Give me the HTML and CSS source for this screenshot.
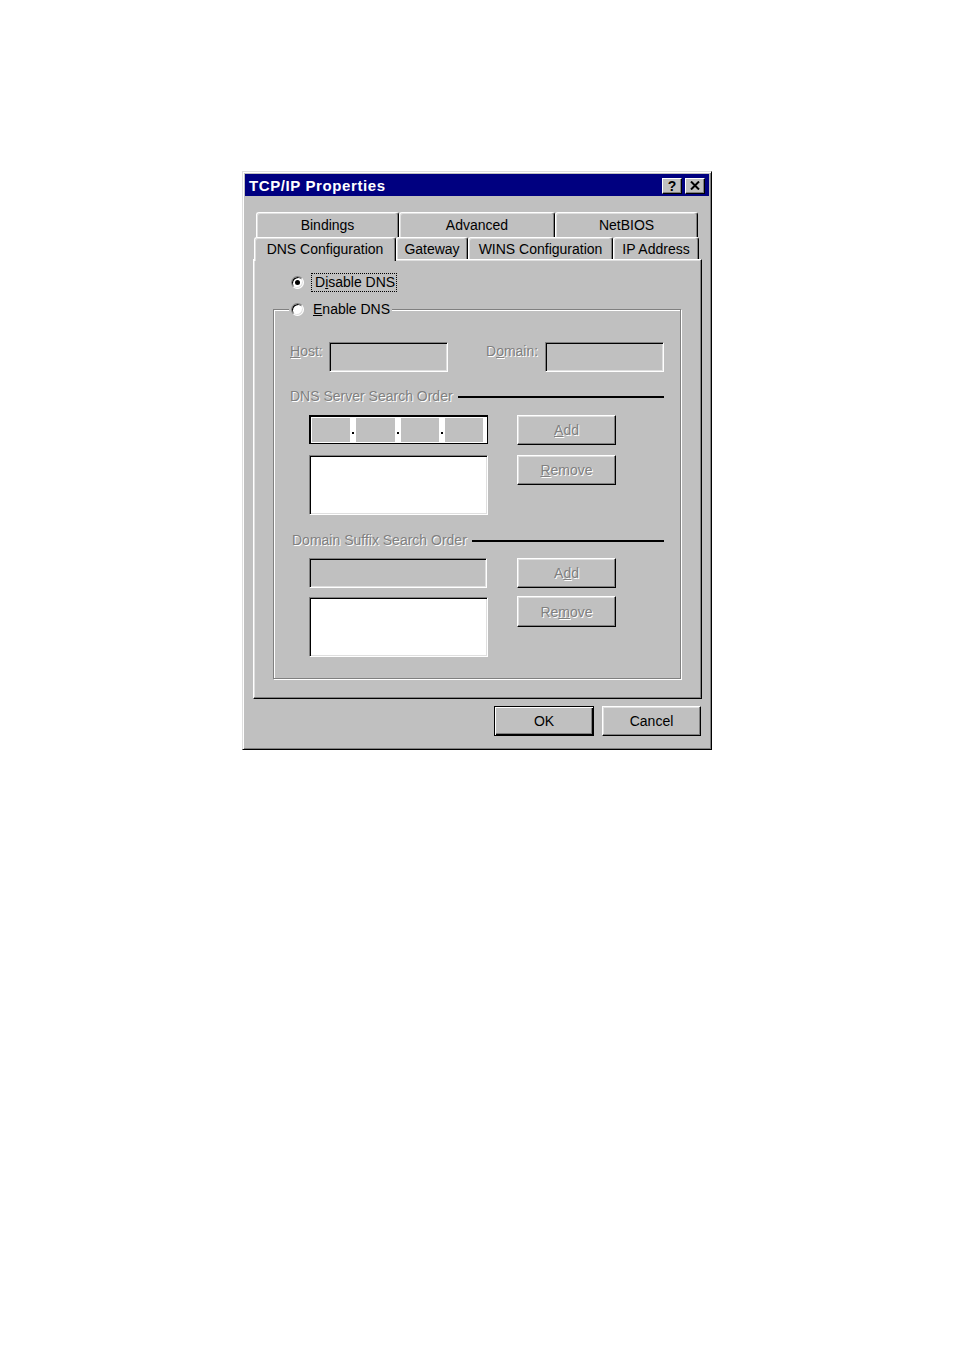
FILE: index.html
```html
<!DOCTYPE html>
<html>
<head>
<meta charset="utf-8">
<title>TCP/IP Properties</title>
<link rel="stylesheet" href="styles.css">
</head>
<body>
<div class="dialog">
  <div class="titlebar">
    <span class="title">TCP/IP Properties</span>
    <div class="tbtns">
      <span class="tbtn help">?</span>
      <span class="tbtn close"><svg width="10" height="9" viewBox="0 0 10 9"><path d="M1 0.5 L9 8.5 M9 0.5 L1 8.5" stroke="#000" stroke-width="2" fill="none"/></svg></span>
    </div>
  </div>

  <div class="tabs">
    <div class="tabrow back">
      <div class="tab t-bind">Bindings</div>
      <div class="tab t-adv">Advanced</div>
      <div class="tab t-net">NetBIOS</div>
    </div>
    <div class="tabrow front">
      <div class="tab sel t-dns">DNS Configuration</div>
      <div class="tab t-gw">Gateway</div>
      <div class="tab t-wins">WINS Configuration</div>
      <div class="tab t-ip">IP Address</div>
    </div>
  </div>

  <div class="panel">
    <div class="radio-row">
      <span class="radio checked"></span>
      <span class="focus">D<u>i</u>sable DNS</span>
    </div>

    <fieldset class="group">
      <legend class="legend"><span class="radio"></span><span class="legend-text"><u>E</u>nable DNS</span></legend>
      <div class="gbody">
        <div class="hostrow">
          <span class="lbl lbl-host dis"><u>H</u>ost:</span>
          <span class="edit"></span>
          <span class="lbl lbl-domain dis">D<u>o</u>main:</span>
          <span class="edit"></span>
        </div>

        <div class="section">
          <span class="dis">DNS Server Search Order</span>
          <span class="rule"></span>
        </div>

        <div class="block">
          <div class="lcol">
            <div class="ipbox">
              <span class="oct"></span><span class="sep"><i></i></span>
              <span class="oct"></span><span class="sep"><i></i></span>
              <span class="oct"></span><span class="sep"><i></i></span>
              <span class="oct"></span>
            </div>
            <div class="list list1"></div>
          </div>
          <div class="rcol">
            <div class="btn dis small"><span><u>A</u>dd</span></div>
            <div class="btn dis small rm1"><span><u>R</u>emove</span></div>
          </div>
        </div>

        <div class="section section2">
          <span class="dis">Domain Suffix Search Order</span>
          <span class="rule"></span>
        </div>

        <div class="block block2">
          <div class="lcol">
            <div class="edit wide"></div>
            <div class="list list2"></div>
          </div>
          <div class="rcol">
            <div class="btn dis small"><span>A<u>d</u>d</span></div>
            <div class="btn dis small rm2"><span>Re<u>m</u>ove</span></div>
          </div>
        </div>
      </div>
    </fieldset>
  </div>

  <div class="actions">
    <div class="btn default ok">OK</div>
    <div class="btn cancel">Cancel</div>
  </div>
</div>
</body>
</html>
```

FILE: styles.css
```css
* { box-sizing: border-box; }

body {
  margin: 0;
  background: #ffffff;
  font-family: "Liberation Sans", Arial, sans-serif;
  font-size: 14px;
  color: #000;
}

.dialog {
  margin: 171px 0 0 242px;
  width: 470px;
  height: 579px;
  background: #c0c0c0;
  border: 1px solid;
  border-color: #dfdfdf #000 #000 #dfdfdf;
  box-shadow: inset 1px 1px #fff, inset -1px -1px #808080;
  padding: 2px;
}

/* Title bar */
.titlebar {
  height: 22px;
  background: #000080;
  color: #fff;
  display: flex;
  align-items: center;
  justify-content: space-between;
  padding: 0 4px 0 4px;
}
.title {
  font-weight: bold;
  font-size: 15px;
  letter-spacing: 0.6px;
  line-height: 20px;
  padding-top: 2px;
}
.tbtns {
  display: flex;
  gap: 3px;
  margin-top: 1px;
}
.tbtn {
  width: 20px;
  height: 16px;
  background: #c0c0c0;
  border: 1px solid;
  border-color: #fff #000 #000 #fff;
  box-shadow: inset -1px -1px #808080;
  display: flex;
  align-items: center;
  justify-content: center;
  color: #000;
}
.help {
  font-weight: bold;
  font-size: 14px;
  line-height: 14px;
}

/* Tabs */
.tabs {
  margin-top: 16px;
  position: relative;
  z-index: 1;
}
.tabrow {
  display: flex;
}
.tabrow.back {
  margin-left: 11px;
  height: 25px;
}
.tabrow.front {
  margin-left: 9px;
  height: 22px;
  align-items: flex-end;
}
.tab {
  background: #c0c0c0;
  border-top: 1px solid #fff;
  border-left: 1px solid #fff;
  border-right: 1px solid #000;
  box-shadow: inset -1px 0 #808080, inset 1px 1px #dfdfdf;
  border-radius: 3px 3px 0 0;
  text-align: center;
  line-height: 17px;
  padding-top: 3px;
}
.back .tab { height: 25px; padding-top: 4px; }
.front .tab { height: 22px; }
.t-bind { width: 143px; }
.t-adv { width: 156px; }
.t-net { width: 143px; }
.t-dns { width: 142px; }
.t-gw { width: 72px; }
.t-wins { width: 145px; }
.t-ip { width: 86px; }
.front .tab.sel {
  height: 24px;
  margin-bottom: -2px;
}

/* Panel */
.panel {
  margin-left: 8px;
  width: 449px;
  height: 440px;
  border: 1px solid;
  border-color: #fff #000 #000 #fff;
  box-shadow: inset -1px -1px #808080, inset 1px 1px #dfdfdf;
  padding: 13px 0 0 37px;
}

.radio-row {
  display: flex;
  align-items: center;
  height: 19px;
}
.radio {
  width: 13px;
  height: 13px;
  border-radius: 50%;
  border: 1px solid;
  border-color: #808080 #fff #fff #808080;
  box-shadow: inset 1px 1px #000, inset -1px -1px #dfdfdf;
  background: #fff;
  display: flex;
  align-items: center;
  justify-content: center;
  flex: none;
}
.radio.checked::after {
  content: "";
  width: 5px;
  height: 5px;
  border-radius: 50%;
  background: #000;
}
.focus {
  margin-left: 7px;
  border: 1px dotted #000;
  padding: 0 1px 0 3px;
  line-height: 17px;
}

/* Group box */
.group {
  margin: 8px 0 0 -18px;
  padding: 0;
  width: 408px;
  min-width: 0;
  border: 1px solid #808080;
  box-shadow: inset 1px 1px #fff, 1px 1px #fff;
}
.legend {
  margin-left: 15px;
  padding: 0 2px;
  display: flex;
  align-items: center;
  height: 19px;
  background: #c0c0c0;
}
.legend-text {
  margin-left: 9px;
  line-height: 19px;
}

.gbody {
  padding: 23px 16px 21px 16px;
}

.dis {
  color: #808080;
  text-shadow: 1px 1px 0 #fff;
}

.hostrow {
  display: flex;
  align-items: flex-start;
  height: 30px;
}
.lbl {
  display: inline-block;
  line-height: 16px;
  margin-top: 1px;
}
.lbl-host { width: 39px; }
.lbl-domain { width: 59px; margin-left: 38px; }

.edit {
  display: block;
  width: 119px;
  height: 30px;
  background: #c0c0c0;
  border: 1px solid;
  border-color: #808080 #fff #fff #808080;
  box-shadow: inset 1px 1px #000, inset -1px -1px #dfdfdf;
}
.edit.wide {
  width: 178px;
  height: 30px;
}

.section {
  display: flex;
  align-items: center;
  height: 16px;
  line-height: 16px;
  margin-top: 16px;
}
.section2 {
  margin-top: 17px;
  padding-left: 2px;
}
.rule {
  flex: 1;
  height: 2px;
  background: #000;
  margin-left: 5px;
  margin-top: 2px;
}

.block {
  display: flex;
  margin-top: 11px;
  padding-left: 19px;
  gap: 29px;
}
.block2 {
  margin-top: 10px;
}
.lcol {
  width: 179px;
  display: flex;
  flex-direction: column;
  gap: 11px;
}
.block2 .lcol {
  gap: 9px;
}
.rcol {
  width: 99px;
  display: flex;
  flex-direction: column;
}

.ipbox {
  height: 29px;
  border: 2px solid #000;
  border-right-width: 1px;
  border-bottom-width: 1px;
  background: #fff;
  padding: 1px 4px 1px 1px;
  display: flex;
}
.oct {
  flex: 1;
  background: #c0c0c0;
}
.sep {
  width: 6px;
  display: flex;
  align-items: flex-end;
  justify-content: center;
  padding-bottom: 8px;
}
.sep i {
  display: block;
  width: 2px;
  height: 2px;
  background: #000;
}

.list {
  height: 60px;
  background: #fff;
  border: 1px solid;
  border-color: #808080 #fff #fff #808080;
  box-shadow: inset 1px 1px #000, inset -1px -1px #dfdfdf;
}

.btn {
  background: #c0c0c0;
  border: 1px solid;
  border-color: #fff #000 #000 #fff;
  box-shadow: inset -1px -1px #808080, inset 1px 1px #dfdfdf;
  display: flex;
  align-items: center;
  justify-content: center;
  height: 30px;
}
.btn.small { width: 99px; }
.rm1 { margin-top: 10px; height: 30px; }
.rm2 { margin-top: 8px; height: 31px; }

.actions {
  display: flex;
  justify-content: flex-end;
  gap: 8px;
  margin-top: 7px;
  padding-right: 8px;
}
.ok {
  width: 100px;
  height: 30px;
  border: 1px solid #000;
  box-shadow: inset 1px 1px #fff, inset -1px -1px #000, inset -2px -2px #808080;
}
.cancel {
  width: 99px;
  height: 30px;
}
```
